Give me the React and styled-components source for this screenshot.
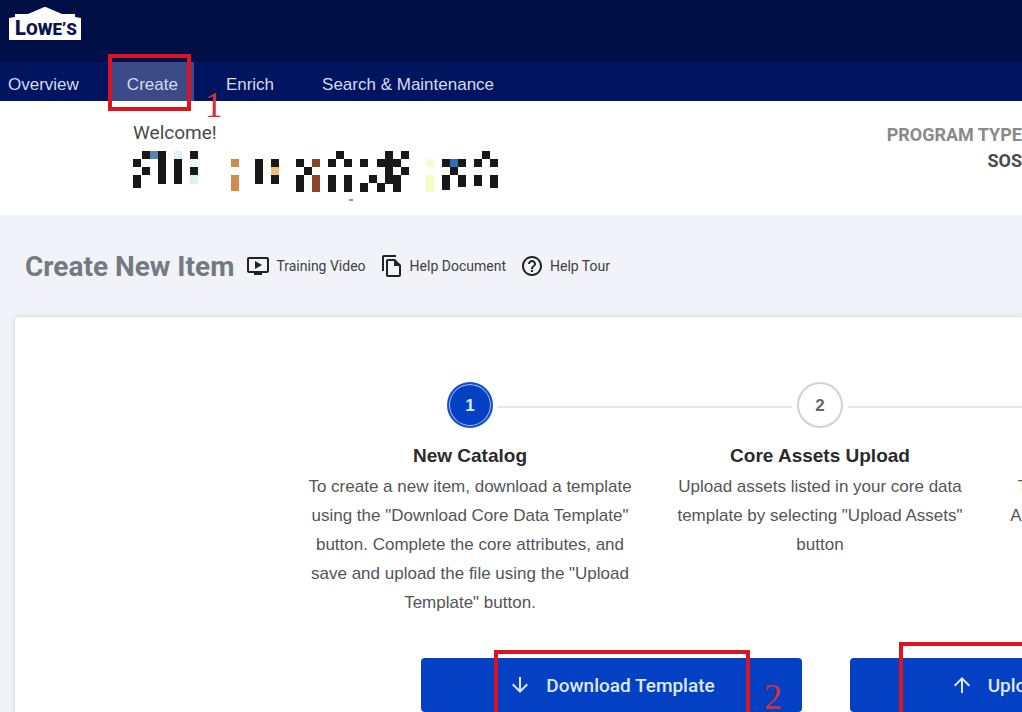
import React from 'react';
import styled, { createGlobalStyle, css } from 'styled-components';
import { MdOndemandVideo, MdOutlineFileCopy, MdHelpOutline, MdArrowDownward, MdArrowUpward } from 'react-icons/md';

const sans = '"Liberation Sans", Arial, sans-serif';
const roboto = 'Roboto, sans-serif';

const GlobalStyle = createGlobalStyle`
  * {
    box-sizing: border-box;
  }
  body {
    margin: 0;
    background: #f1f3f8;
    font-family: ${sans};
  }
  h1, h2, p {
    margin: 0;
  }
`;

const Page = styled.div`
  display: flex;
  flex-direction: column;
  min-height: 100vh;
  overflow: hidden;
`;

const TopBar = styled.header`
  display: flex;
  height: 62px;
  padding: 7px 8px;
  background: #000f45;
`;

const Nav = styled.nav`
  display: flex;
  gap: 16px;
  height: 39px;
  padding-right: 16px;
  background: #00145f;
`;

const NavItem = styled.div`
  position: relative;
  display: flex;

  &:first-child {
    margin-left: -8px;
  }
`;

const NavLink = styled.a`
  display: flex;
  align-items: center;
  padding: 6px 16px 0;
  font-size: 17px;
  color: #d5dbee;
  text-decoration: none;
  white-space: nowrap;
  background: ${(props) => (props.$active ? '#3c4b87' : 'transparent')};
`;

const Frame = styled.span`
  position: absolute;
  border: 4px solid #dc1420;
  pointer-events: none;
  z-index: 1;
  ${(props) => props.$on === 'nav' && css`
    inset: -8px 3px -10px -3px;
  `}
  ${(props) => props.$on === 'download' && css`
    inset: -8px 52px -24px 73px;
  `}
  ${(props) => props.$on === 'upload' && css`
    inset: -16px 52px -24px 49px;
  `}
`;

const Marker = styled.span`
  position: absolute;
  font-family: "Liberation Serif", "Times New Roman", serif;
  font-size: 36px;
  line-height: 36px;
  color: #d03039;
  z-index: 1;
  ${(props) => props.$on === 'nav' && css`
    left: 94px;
    top: 25px;
  `}
  ${(props) => props.$on === 'download' && css`
    right: 20px;
    top: 21px;
  `}
`;

const Account = styled.section`
  display: flex;
  justify-content: space-between;
  height: 114px;
  padding: 21px 0 0 133px;
  background: #fff;
`;

const Welcome = styled.p`
  font-family: ${roboto};
  font-size: 19px;
  line-height: 22px;
  color: #4a4a4a;
`;

const Mosaic = styled.svg`
  display: block;
  margin-top: 7px;
`;

const Program = styled.div`
  font-family: ${roboto};
  font-size: 18px;
  font-weight: 700;
  line-height: 26px;
  text-align: right;
  white-space: nowrap;
  color: #4a4a4a;
`;

const ProgramLabel = styled.p`
  color: #8a8a8a;
`;

const TitleRow = styled.div`
  display: flex;
  align-items: center;
  height: 102px;
  padding-left: 25px;
`;

const Title = styled.h1`
  margin-right: 12px;
  font-family: ${roboto};
  font-size: 28px;
  font-weight: 700;
  color: #737a82;
`;

const HelpLink = styled.a`
  display: flex;
  align-items: center;
  gap: 6px;
  margin-right: 14px;
  font-family: ${roboto};
  font-size: 14px;
  color: #3d3f42;
  text-decoration: none;

  svg {
    color: #222;
  }
`;

const Card = styled.main`
  flex: 1;
  margin-left: 15px;
  padding: 65px 0 24px;
  border-radius: 4px 0 0 0;
  background: #fff;
  box-shadow: 0 0 5px rgba(40, 50, 80, 0.18);
`;

const Steps = styled.div`
  display: grid;
  grid-template-columns: repeat(3, 350px);
  padding-left: 280px;
`;

const Step = styled.section`
  display: flex;
  flex-direction: column;
  align-items: center;
  text-align: center;
`;

/* the connectors fill whatever is left on each side of the number */
const StepHead = styled.div`
  display: flex;
  align-items: center;
  align-self: stretch;
`;

const Line = styled.span`
  flex: 1;
  height: 2px;
  margin-top: 4px;
  background: ${(props) => (props.$hidden ? 'transparent' : '#e6e6e6')};
`;

const Circle = styled.span`
  display: flex;
  align-items: center;
  justify-content: center;
  width: 46px;
  height: 46px;
  margin: 0 5px;
  padding-top: 2px;
  border-radius: 50%;
  border: 2px solid ${(props) => (props.$active ? '#1550c4' : '#d2d2d2')};
  box-shadow: ${(props) => (props.$active ? 'inset 0 0 0 1px #b9cdf2' : 'none')};
  font-size: 17px;
  font-weight: 700;
  color: ${(props) => (props.$active ? '#dfe8fa' : '#666')};
  background: ${(props) => (props.$active ? '#0340c4' : '#fff')};
`;

const StepTitle = styled.h2`
  margin-top: 15px;
  font-size: 19px;
  font-weight: 700;
  line-height: 26px;
  color: #2b2b2b;
`;

const StepText = styled.p`
  margin-top: 3px;
  padding: 0 8px;
  font-size: 17px;
  line-height: 29px;
  color: #555;
`;

const Actions = styled.div`
  display: flex;
  gap: 48px;
  margin-top: 41px;
  padding-left: 406px;
`;

const Action = styled.div`
  position: relative;
  flex: 0 0 381px;
`;

const ActionButton = styled.button`
  display: flex;
  align-items: center;
  justify-content: center;
  gap: 14px;
  width: 100%;
  height: 54px;
  padding: 0;
  border: 0;
  border-radius: 4px;
  font-family: ${roboto};
  font-size: 19px;
  font-weight: 500;
  color: #dfe8fb;
  background: #0340c4;
`;

// x, y, width, height, colour
const dark = '#181818';
const blocks = [
  [9, 0, 8, 8, dark], [17, 0, 8, 8, '#5b83b5'], [25, 0, 8, 33, dark],
  [0, 8, 8, 8, dark], [9, 16, 8, 8, dark], [0, 24, 8, 13, dark],
  [41, 0, 8, 8, '#dbf1fb'], [41, 8, 8, 25, dark],
  [57, 0, 8, 8, dark], [57, 8, 8, 8, '#e4faf7'], [57, 16, 8, 8, dark], [57, 24, 8, 9, '#d6f5f2'],
  [98, 8, 8, 8, '#d28b49'], [98, 24, 8, 16, '#d28b49'],
  [122, 8, 8, 25, dark], [138, 8, 8, 8, dark], [138, 16, 8, 8, '#f0c07a'], [138, 24, 8, 9, dark],
  [163, 8, 8, 8, dark], [171, 16, 8, 8, dark], [163, 24, 8, 17, dark],
  [179, 8, 8, 8, '#8a4528'], [179, 24, 8, 17, '#8a4528'],
  [203, 0, 8, 8, dark], [195, 8, 8, 8, dark], [211, 8, 8, 8, dark],
  [195, 24, 8, 17, dark], [211, 24, 8, 17, dark],
  [227, 8, 8, 8, dark], [252, 0, 8, 33, dark], [244, 8, 24, 8, dark],
  [268, 0, 8, 8, dark], [268, 16, 8, 8, dark], [252, 24, 16, 9, dark], [260, 32, 8, 9, dark],
  [236, 24, 8, 8, dark], [227, 32, 8, 9, dark], [244, 32, 8, 9, dark],
  [293, 8, 8, 8, '#f8fbcb'], [293, 24, 8, 17, '#f6fac4'],
  [309, 8, 8, 8, dark], [317, 8, 8, 8, '#326dba'], [325, 8, 8, 8, dark], [317, 16, 8, 8, dark],
  [309, 24, 8, 15, dark], [325, 24, 8, 12, dark],
  [349, 0, 8, 8, dark], [341, 8, 8, 8, dark], [357, 8, 8, 8, dark],
  [341, 24, 8, 11, dark], [357, 24, 8, 13, dark],
  [216, 48, 4, 2, '#999'],
];

function Logo() {
  return (
    <svg width="74" height="34" viewBox="0 0 74 34" role="img" aria-label="Lowe's">
      <path d="M1 11L7 10V7H20L34 1Q37 -1 40 1L54 7H67V10L73 11V33H1Z" fill="#fff" />
      <g fill="#0a1648" fontFamily="Roboto, sans-serif" fontWeight="900">
        <text x="7" y="28" fontSize="20">L</text>
        <text x="18" y="28" fontSize="17">OWE’S</text>
      </g>
    </svg>
  );
}

function App() {
  return (
    <>
      <GlobalStyle />
      <Page>
        <TopBar>
          <Logo />
        </TopBar>

        <Nav>
          <NavItem>
            <NavLink href="#overview">Overview</NavLink>
          </NavItem>
          <NavItem>
            <NavLink href="#create" $active>Create</NavLink>
            <Frame $on="nav" />
            <Marker $on="nav">1</Marker>
          </NavItem>
          <NavItem>
            <NavLink href="#enrich">Enrich</NavLink>
          </NavItem>
          <NavItem>
            <NavLink href="#search">Search &amp; Maintenance</NavLink>
          </NavItem>
        </Nav>

        <Account>
          <div>
            <Welcome>Welcome!</Welcome>
            <Mosaic width="368" height="52" aria-hidden="true">
              {blocks.map(([x, y, w, h, fill], i) => (
                <rect key={i} x={x} y={y} width={w} height={h} fill={fill} />
              ))}
            </Mosaic>
          </div>
          <Program>
            <ProgramLabel>PROGRAM TYPE</ProgramLabel>
            <p>SOS</p>
          </Program>
        </Account>

        <TitleRow>
          <Title>Create New Item</Title>
          <HelpLink href="#video"><MdOndemandVideo size={24} />Training Video</HelpLink>
          <HelpLink href="#document"><MdOutlineFileCopy size={24} />Help Document</HelpLink>
          <HelpLink href="#tour"><MdHelpOutline size={24} />Help Tour</HelpLink>
        </TitleRow>

        <Card>
          <Steps>
            <Step>
              <StepHead>
                <Line $hidden />
                <Circle $active>1</Circle>
                <Line />
              </StepHead>
              <StepTitle>New Catalog</StepTitle>
              <StepText>
                To create a new item, download a template using the "Download Core Data Template" button.
                Complete the core attributes, and save and upload the file using the "Upload Template" button.
              </StepText>
            </Step>
            <Step>
              <StepHead>
                <Line />
                <Circle>2</Circle>
                <Line />
              </StepHead>
              <StepTitle>Core Assets Upload</StepTitle>
              <StepText>
                Upload assets listed in your core data template by selecting "Upload Assets" button
              </StepText>
            </Step>
            <Step>
              <StepHead>
                <Line />
                <Circle>3</Circle>
                <Line $hidden />
              </StepHead>
              <StepTitle>Track Items</StepTitle>
              <StepText>
                Track the status of your new items in the<br />
                Activity section of the main Overview page
              </StepText>
            </Step>
          </Steps>

          <Actions>
            <Action>
              <ActionButton type="button"><MdArrowDownward size={24} />Download Template</ActionButton>
              <Frame $on="download" />
              <Marker $on="download">2</Marker>
            </Action>
            <Action>
              <ActionButton type="button"><MdArrowUpward size={24} />Upload Template</ActionButton>
              <Frame $on="upload" />
            </Action>
          </Actions>
        </Card>
      </Page>
    </>
  );
}

export default App;
